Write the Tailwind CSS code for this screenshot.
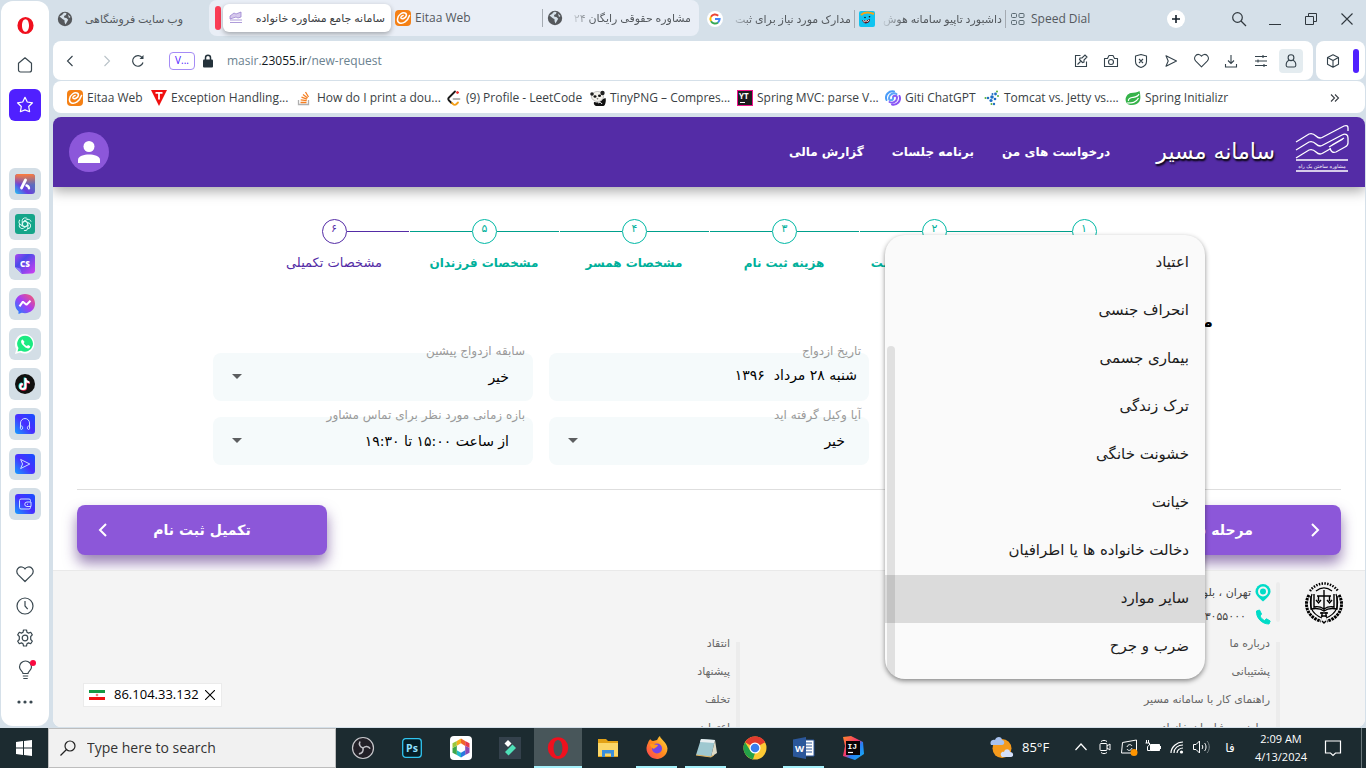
<!DOCTYPE html>
<html lang="fa">
<head>
<meta charset="utf-8">
<meta name="viewport" content="width=device-width, initial-scale=1">
<title>سامانه جامع مشاوره خانواده</title>
<script src="https://cdn.jsdelivr.net/npm/@tailwindcss/browser@4"></script>
</head>
<body class="flex h-screen flex-col overflow-hidden bg-[#d5e0e9] font-['Open_Sans','DejaVu_Sans',sans-serif] text-xs text-[#3a3f45]">

<svg width="0" height="0" class="absolute" aria-hidden="true">
  <defs>
    <linearGradient id="gAria" x1="0" y1="1" x2="1" y2="0"><stop offset="0" stop-color="#22c8f0"/><stop offset=".35" stop-color="#6a3be0"/><stop offset=".65" stop-color="#5b6cc0"/><stop offset="1" stop-color="#3b62d0"/></linearGradient>
    <linearGradient id="gTop" x1="0" y1="0" x2="0" y2="1"><stop offset="0" stop-color="#ff7a3c"/><stop offset=".55" stop-color="#ff7a3c" stop-opacity="0"/></linearGradient>
    <linearGradient id="gCs" x1="0" y1="0" x2="1" y2="1"><stop offset="0" stop-color="#b045f0"/><stop offset=".35" stop-color="#4a4be8"/><stop offset="1" stop-color="#d63df2"/></linearGradient>
    <linearGradient id="gMsg" x1="0" y1="1" x2="1" y2="0"><stop offset="0" stop-color="#0a8cff"/><stop offset=".5" stop-color="#a63cf5"/><stop offset="1" stop-color="#ff5c60"/></linearGradient>
    <linearGradient id="gBlue" x1="0" y1="1" x2="1" y2="0"><stop offset="0" stop-color="#14a0ff"/><stop offset=".5" stop-color="#4a2dff"/><stop offset="1" stop-color="#1450ff"/></linearGradient>
    <linearGradient id="gFox" x1="0" y1="1" x2="1" y2="0"><stop offset="0" stop-color="#ff3b5c"/><stop offset=".5" stop-color="#ff8a1e"/><stop offset="1" stop-color="#ffe040"/></linearGradient>
    <linearGradient id="gIj" x1="0" y1="0" x2="1" y2="1"><stop offset="0" stop-color="#ff8a2a"/><stop offset=".45" stop-color="#f5336e"/><stop offset=".6" stop-color="#2a7df5"/><stop offset="1" stop-color="#12b7f5"/></linearGradient>
    <symbol id="globe" viewBox="0 0 16 16"><circle cx="8" cy="8" r="7.200" fill="#55585c"/><path d="M2.500 5.500 5 4l2-2.200 2.500.3-.5 2-2 1 .4 1.700 2 .2 1.800 1.700-1 1.800-1.700 3-.9-2.200-.1-2-2-1.200z" fill="#d5e0e9"/><path d="M11 3.500 13.500 6l-1.500 1z" fill="#d5e0e9"/></symbol>
    <symbol id="eitaa" viewBox="0 0 16 16"><rect width="16" height="16" rx="4" fill="#f58014"/><path d="M14.500 5.500c-2 6-6.500 8.700-10 7.500C1.500 12 1.800 6.500 5.500 4 8.800 1.800 12 3 11.300 5.800c-.6 2.200-3.800 3.400-5.100 2.600-1-.7.5-2.900 2-3" fill="none" stroke="#fff" stroke-width="1.500" stroke-linecap="round"/></symbol>
    <symbol id="send" viewBox="0 0 16 16"><path d="M3 2.800 13.500 8 3 13.200 5.200 8z" fill="none" stroke="currentColor" stroke-width="1.100" stroke-linejoin="round"/></symbol>
    <symbol id="heart" viewBox="0 0 20 20"><path d="M10 17.500 3.300 10.800C-.2 7 3.500 1.500 7.800 3.200 9 3.600 9.600 4.300 10 5c.4-.7 1-1.400 2.200-1.800 4.300-1.700 8 3.800 4.500 7.600z" fill="none" stroke="currentColor" stroke-width="1.200" stroke-linejoin="round"/></symbol>
    <symbol id="opera" viewBox="0 0 20 20"><path fill-rule="evenodd" fill="#f0101e" d="M10 1a8.500 9 0 1 0 0 18 8.500 9 0 0 0 0-18zm0 2.300c2.200 0 3.700 3 3.700 6.700s-1.500 6.700-3.700 6.700S6.300 13.700 6.300 10 7.800 3.300 10 3.300z"/></symbol>
  </defs>
</svg>

<div class="flex min-h-0 flex-1 gap-1 pl-px">

  <!-- Browser sidebar -->
  <aside class="my-px mb-[2px] flex w-12 shrink-0 flex-col items-center rounded-xl bg-white pt-3 pb-2 text-[#3a4850]">
    <button aria-label="Opera menu" class="h-6 w-6"><svg viewBox="0 0 20 20" class="mx-auto h-[19px] w-[19px]"><use href="#opera"/></svg></button>
    <button aria-label="Home" class="mt-4 h-6 w-6"><svg viewBox="0 0 20 20" class="mx-auto h-5 w-5" fill="none" stroke="currentColor" stroke-width="1.200" stroke-linejoin="round"><path d="M3.500 8.200 10 2.800l6.500 5.400V15a2 2 0 0 1-2 2h-9a2 2 0 0 1-2-2z"/></svg></button>
    <button aria-label="Workspace" class="mt-3 h-8 w-8 rounded-md bg-[#5020ff] text-white"><svg viewBox="0 0 20 20" class="mx-auto h-5 w-5" fill="none" stroke="currentColor" stroke-width="1.200" stroke-linejoin="round"><path d="M10 2.300 12.300 7l5.200.8-3.800 3.700.9 5.200-4.600-1.800-4.600 1.800.9-5.200L2.500 7.800 7.700 7z"/></svg></button>
    <div class="mt-[47px] flex flex-col gap-2">
      <button aria-label="Aria" class="flex h-8 w-8 items-center justify-center rounded-md bg-[#d3dee6]"><svg viewBox="0 0 20 20" class="h-5 w-5"><rect width="20" height="20" rx="3" fill="url(#gAria)"/><rect width="20" height="20" rx="3" fill="url(#gTop)"/><path d="M6.500 14 10.500 6" stroke="#fff" stroke-width="2.800" stroke-linecap="round"/><path d="M11.500 11.500c1.500.3 2.200 1.200 2.500 2.800" fill="none" stroke="#fff" stroke-width="2.400" stroke-linecap="round"/></svg></button>
      <button aria-label="ChatGPT" class="flex h-8 w-8 items-center justify-center rounded-md bg-[#d3dee6]"><svg viewBox="0 0 20 20" class="h-5 w-5"><rect width="20" height="20" rx="3" fill="#15a58a"/><g fill="none" stroke="#e8fffa" stroke-width=".9"><g id="petal"><path d="M7.200 12.500V6.500a3 3 0 0 1 5.500-1.300M7.200 8.300l4.500-2.600a3 3 0 0 1 4.400 2"/></g><use href="#petal" transform="rotate(120 10 10)"/><use href="#petal" transform="rotate(240 10 10)"/><path d="m10 7.300 2.400 1.400v2.700L10 12.700l-2.400-1.300V8.700z"/></g></svg></button>
      <button aria-label="ChatSonic" class="flex h-8 w-8 items-center justify-center rounded-md bg-[#d3dee6]"><svg viewBox="0 0 20 20" class="h-5 w-5"><path d="M3 0h14a3 3 0 0 1 3 3v13a3 3 0 0 1-3 3.500l-10 .5-7-7V3a3 3 0 0 1 3-3z" fill="url(#gCs)"/><path d="m0 13 5 1.500L7 20z" fill="#8f7bff"/><text x="10" y="13" text-anchor="middle" font-family="Open Sans" font-size="8" font-weight="800" fill="#fff">CS</text></svg></button>
      <button aria-label="Messenger" class="flex h-8 w-8 items-center justify-center rounded-md bg-[#d3dee6]"><svg viewBox="0 0 20 20" class="h-5 w-5"><path d="M10 0c6 0 10 4.200 10 9.600s-4 9.600-10 9.600c-1.200 0-2.300-.2-3.300-.5L3.500 20v-2.700C1.300 15.600 0 12.900 0 9.600 0 4.200 4 0 10 0z" fill="url(#gMsg)"/><path d="m4.500 12.300 3.400-4.600 3.600 3 4-4" fill="none" stroke="#fff" stroke-width="2" stroke-linejoin="bevel"/></svg></button>
      <button aria-label="WhatsApp" class="flex h-8 w-8 items-center justify-center rounded-md bg-[#d3dee6]"><svg viewBox="0 0 20 20" class="h-5 w-5"><path d="M10 0a9.800 9.800 0 1 1-4.800 18.600L0 20l1.400-5A9.800 9.800 0 0 1 10 0z" fill="#fff"/><path d="M10.200 1.700a8 8 0 1 1-4.100 15L2.500 17.500l1-3.400a8 8 0 0 1 6.700-12.400z" fill="#1bea81"/><path d="M7.600 5.500c-2 .8-2 3 .2 5.600s4.800 4.200 6.800 2.900l.7-1.800-2.200-1.300-1.300 1.200c-1.500-.6-2.500-1.700-3.100-3l.9-1.100z" fill="#fff"/></svg></button>
      <button aria-label="TikTok" class="flex h-8 w-8 items-center justify-center rounded-md bg-[#d3dee6]"><svg viewBox="0 0 20 20" class="h-5 w-5"><circle cx="10" cy="10" r="10" fill="#10100f"/><g fill="none" stroke-width="2"><path d="M10.200 4v8.500a2.600 2.600 0 1 1-2.700-2.600M10.200 4.500a4 4 0 0 0 3.900 3.700" stroke="#2df1ea" transform="translate(-.5 -.4)"/><path d="M10.200 4v8.500a2.600 2.600 0 1 1-2.700-2.600M10.200 4.500a4 4 0 0 0 3.900 3.700" stroke="#fe2c55" transform="translate(.9 .7)"/><path d="M10.500 4v8.500a2.600 2.600 0 1 1-2.700-2.600M10.500 4.500a4 4 0 0 0 3.900 3.700" stroke="#fff"/></g></svg></button>
      <button aria-label="Player" class="flex h-8 w-8 items-center justify-center rounded-md bg-[#d3dee6]"><svg viewBox="0 0 20 20" class="h-5 w-5"><rect width="20" height="20" rx="3" fill="url(#gBlue)"/><path d="M5.500 14V9a4.500 4.500 0 0 1 9 0v5M5.500 12h1c1.500 0 1.500 3.500 0 3.500-1.200 0-1.200-1-1-3.500zm9 0h-1c-1.500 0-1.500 3.500 0 3.500 1.200 0 1.200-1 1-3.500z" fill="none" stroke="#cfe4ff"/></svg></button>
      <button aria-label="My Flow" class="flex h-8 w-8 items-center justify-center rounded-md bg-[#d3dee6]"><svg viewBox="0 0 20 20" class="h-5 w-5 text-[#cfe4ff]"><rect width="20" height="20" rx="3" fill="url(#gBlue)"/><use href="#send" x="3" y="3" width="14" height="14"/></svg></button>
      <button aria-label="Wallet" class="flex h-8 w-8 items-center justify-center rounded-md bg-[#d3dee6]"><svg viewBox="0 0 20 20" class="h-5 w-5"><rect width="20" height="20" rx="3" fill="url(#gBlue)"/><path d="M15.500 7.500V6.500A1.500 1.500 0 0 0 14 5H6a1.500 1.500 0 0 0-1.500 1.500v7A1.500 1.500 0 0 0 6 15h8a1.500 1.500 0 0 0 1.500-1.500v-1M16 8h-4a2 2 0 0 0 0 4.500h4zM12 10.300h1" fill="none" stroke="#cfe4ff"/></svg></button>
    </div>
    <div class="mt-auto flex flex-col items-center">
      <button aria-label="Bookmarks" class="flex h-8 w-8 items-center justify-center"><svg viewBox="0 0 20 20" class="h-5 w-5"><use href="#heart"/></svg></button>
      <button aria-label="History" class="flex h-8 w-8 items-center justify-center"><svg viewBox="0 0 20 20" class="h-5 w-5" fill="none" stroke="currentColor" stroke-width="1.200"><circle cx="10" cy="10" r="8"/><path d="M10 5v5l2.700 3.200"/></svg></button>
      <button aria-label="Settings" class="flex h-8 w-8 items-center justify-center"><svg viewBox="0 0 20 20" class="h-5 w-5" fill="none" stroke="currentColor" stroke-width="1.200" stroke-linejoin="round"><circle cx="10" cy="10" r="2.800"/><path d="M8.500 2h3l.5 2.300 1.500.8 2.200-.8 1.600 2.600L15.700 8.500v3l1.600 1.600-1.600 2.600-2.200-.8-1.500.8-.5 2.300h-3L8 15.700l-1.500-.8-2.200.8-1.600-2.600 1.600-1.600v-3L2.700 6.900l1.600-2.600 2.200.8L8 4.300z"/></svg></button>
      <button aria-label="Tips" class="relative flex h-8 w-8 items-center justify-center"><svg viewBox="0 0 20 20" class="h-5 w-5" fill="none" stroke="currentColor" stroke-width="1.200"><path d="M8 13.500c0-2-3.500-3-3.500-6.500a6 6 0 0 1 12 0c0 3.500-3.500 4.500-3.500 6.500zM7.800 16h5.400M8.300 18.500h4.400"/></svg><span class="absolute top-[6px] right-[5px] h-[6px] w-[6px] rounded-full bg-[#fa0a40]"></span></button>
      <button aria-label="More" class="flex h-8 w-8 items-center justify-center"><svg viewBox="0 0 20 20" class="h-5 w-5" fill="currentColor"><circle cx="4" cy="10" r="1.600"/><circle cx="10" cy="10" r="1.600"/><circle cx="16" cy="10" r="1.600"/></svg></button>
    </div>
  </aside>

  <div class="flex min-w-0 flex-1 flex-col pr-px">

    <!-- Tab strip -->
    <div class="flex h-[41px] shrink-0 items-start text-[#54595e]">
      <button class="mt-1 flex h-[30px] w-[156px] items-center gap-1 pl-1"><svg class="h-4 w-4 shrink-0"><use href="#globe"/></svg><span dir="rtl" class="w-[106px] whitespace-nowrap text-right text-[11px]">وب سایت فروشگاهی</span></button>
      <div class="flex h-[36px] w-[490px] items-center rounded-lg bg-[#e9eef6] pl-[6px]">
        <span class="h-6 w-[6px] rounded-full bg-[#fa3c55]"></span>
        <button class="ml-[2px] flex h-7 w-[168px] items-center gap-1 rounded-md bg-white px-[6px] text-[#3c4043] shadow-[0_2px_5px_rgba(0,0,0,.3)]"><svg viewBox="0 0 14 14" class="h-[14px] w-[14px] shrink-0"><path d="m1 5 4-3 2 1 5-2v5L9 7 7 6 1 8zM1 9h12M1 11.500h12" fill="#d6c8ec" stroke="#9b84d0" stroke-width=".8"/></svg><span dir="rtl" class="min-w-0 flex-1 whitespace-nowrap text-right text-[11px]">سامانه جامع مشاوره خانواده</span></button>
        <button class="ml-1 flex h-[18px] w-[148px] items-center gap-1 border-r border-[#a5abb2]"><svg class="h-4 w-4 shrink-0"><use href="#eitaa"/></svg>Eitaa Web</button>
        <button class="flex h-7 w-[149px] items-center gap-[6px] pl-1"><svg class="h-4 w-4 shrink-0"><use href="#globe"/></svg><span dir="rtl" class="w-[122px] overflow-hidden whitespace-nowrap text-right text-[11px] [mask-image:linear-gradient(to_right,transparent,black_24px)]">مشاوره حقوقی رایگان ۲۴</span></button>
      </div>
      <button class="mt-1 flex h-[30px] w-[155px] items-center gap-[6px] pl-2"><svg viewBox="0 0 16 16" class="h-4 w-4 shrink-0"><circle cx="8" cy="8" r="8" fill="#fff"/><g fill="none" stroke-width="2"><path d="M11.200 4.700A4.600 4.600 0 0 0 4 5.700" stroke="#ea4335"/><path d="M4 5.700a4.600 4.600 0 0 0 0 4.600" stroke="#fbbc05"/><path d="M4 10.300a4.600 4.600 0 0 0 7 1.100" stroke="#34a853"/><path d="M8 8h4.600a4.600 4.600 0 0 1-1.600 3.400" stroke="#4285f4"/></g></svg><span dir="rtl" class="w-[122px] overflow-hidden whitespace-nowrap text-right text-[11px] [mask-image:linear-gradient(to_right,transparent,black_24px)]">مدارک مورد نیاز برای ثبت</span></button>
      <button class="mt-[10px] flex h-[18px] w-[152px] items-center gap-[5px] border-x border-[#a5abb2] pl-1"><svg viewBox="0 0 16 16" class="h-4 w-4 shrink-0"><rect width="16" height="16" rx="2" fill="#10c4f0"/><path d="M2 4C5 1 10 1 15 3" stroke="#f5a31a" stroke-width="2" fill="none"/><path d="M3 9c3 1 6 0 8-1 .5 4-6 7-8 1z" fill="#5a1620"/><path d="m4 9.500 1.500 1.200L7 9.700l1.500.8 1.500-1.300" fill="none" stroke="#fff"/><circle cx="6" cy="6.500" r=".8" fill="#111"/><circle cx="10.500" cy="5.800" r=".8" fill="#111"/></svg><span dir="rtl" class="w-[122px] overflow-hidden whitespace-nowrap text-right text-[11px] [mask-image:linear-gradient(to_right,transparent,black_24px)]">داشبورد تاپیو سامانه هوش</span></button>
      <button class="mt-1 flex h-[30px] items-center gap-[6px] pl-[5px]"><svg viewBox="0 0 14 14" class="h-[14px] w-[14px]" fill="none" stroke="#5b6a72"><rect x=".5" y="1.500" width="5" height="4" rx="1"/><rect x="8" y="1.500" width="5" height="4" rx="1"/><rect x=".5" y="8.500" width="5" height="4" rx="1"/><rect x="8" y="8.500" width="5" height="4" rx="1"/></svg>Speed Dial</button>
      <button aria-label="New tab" class="mt-[10px] ml-auto flex h-[18px] w-[18px] items-center justify-center rounded-full bg-white"><svg viewBox="0 0 8 8" class="h-2 w-2"><path d="M4 0v8M0 4h8" stroke="#14202a" stroke-width="1.600"/></svg></button>
      <div class="mt-[7px] ml-[36px] flex text-[#30383e]">
        <button aria-label="Search tabs" class="flex h-6 w-9 items-center justify-center"><svg viewBox="0 0 16 16" class="h-4 w-4" fill="none" stroke="currentColor" stroke-width="1.200"><circle cx="6.500" cy="6.500" r="4.800"/><path d="m10 10 5 5"/></svg></button>
        <button aria-label="Minimize" class="flex h-6 w-9 items-center justify-center"><svg viewBox="0 0 14 14" class="h-[14px] w-[14px]"><path d="M1 12.500h12" stroke="currentColor"/></svg></button>
        <button aria-label="Restore" class="flex h-6 w-9 items-center justify-center"><svg viewBox="0 0 14 14" class="h-[14px] w-[14px]" fill="none" stroke="currentColor"><path d="M1.500 4.500h8v8h-8zM4.500 4.500v-3h8v8h-3"/></svg></button>
        <button aria-label="Close" class="flex h-6 w-9 items-center justify-center"><svg viewBox="0 0 14 14" class="h-[14px] w-[14px]"><path d="m1.500 1.500 11 11M12.500 1.500l-11 11" stroke="currentColor" stroke-width="1.100"/></svg></button>
      </div>
    </div>

    <!-- Address bar -->
    <div class="flex h-[39px] shrink-0 gap-[3px] text-[#34424b]">
      <div class="flex min-w-0 flex-1 items-center rounded-lg bg-white pr-[7px] pl-2">
        <button aria-label="Back" class="flex w-[18px] justify-center"><svg viewBox="0 0 12 12" class="h-3 w-3" fill="none" stroke="currentColor" stroke-width="1.100"><path d="M8.500 1 3.500 6l5 5"/></svg></button>
        <button aria-label="Forward" class="ml-[19px] flex w-[18px] justify-center text-[#b9c2c8]"><svg viewBox="0 0 12 12" class="h-3 w-3" fill="none" stroke="currentColor" stroke-width="1.100"><path d="m3.500 1 5 5-5 5"/></svg></button>
        <button aria-label="Reload" class="ml-[12px] flex w-[20px] justify-center"><svg viewBox="0 0 14 14" class="h-[14px] w-[14px]" fill="none" stroke="currentColor" stroke-width="1.200"><path d="M12 8.500a5.300 5.300 0 1 1-.7-4.600"/><path d="M12.500 1v4h-4z" fill="currentColor" stroke="none"/></svg></button>
        <button class="ml-[21px] flex h-[18px] w-[26px] items-center justify-center rounded border border-[#a58cf5] text-[10px] text-[#5020ff]">V...</button>
        <svg viewBox="0 0 12 14" class="ml-[7px] h-[14px] w-3"><rect x="1" y="5.500" width="10" height="8" rx="1" fill="#24323b"/><path d="M3.500 6V3.700a2.500 2.500 0 0 1 5 0V6" fill="none" stroke="#24323b" stroke-width="1.500"/></svg>
        <a href="#" class="ml-[13px] text-xs text-[#6b828f]">masir.<span class="text-[#10181d]">23055.ir</span>/new-request</a>
        <div class="ml-auto flex">
          <button aria-label="Edit" class="flex h-6 w-[30px] items-center justify-center"><svg viewBox="0 0 16 16" class="h-4 w-4" fill="none" stroke="currentColor" stroke-width="1.100"><path d="M7.500 2.500h-5v11h11v-5M4.500 11.500 8 8M6.500 6.500l3 3 1.500-.5V7l3-3-2-2-3 3H7z"/></svg></button>
          <button aria-label="Snapshot" class="flex h-6 w-[30px] items-center justify-center"><svg viewBox="0 0 16 16" class="h-4 w-4" fill="none" stroke="currentColor" stroke-width="1.100"><path d="M1.500 5.500h3l1.500-3h4l1.500 3h3v8h-13z" stroke-linejoin="round"/><circle cx="8" cy="9" r="2.500"/></svg></button>
          <button aria-label="Ad blocker" class="flex h-6 w-[30px] items-center justify-center"><svg viewBox="0 0 16 16" class="h-4 w-4" fill="none" stroke="currentColor" stroke-width="1.100"><path d="M8 1.500 13.500 3v5.500c0 3-2.500 5-5.500 6-3-1-5.500-3-5.500-6V3zM6 6l4 4M10 6l-4 4" stroke-linejoin="round"/></svg></button>
          <button aria-label="Send to My Flow" class="flex h-6 w-[30px] items-center justify-center"><svg class="h-4 w-4"><use href="#send"/></svg></button>
          <button aria-label="Add to bookmarks" class="flex h-6 w-[30px] items-center justify-center"><svg viewBox="0 0 20 20" class="h-[17px] w-[17px]"><use href="#heart"/></svg></button>
          <button aria-label="Downloads" class="flex h-6 w-[30px] items-center justify-center"><svg viewBox="0 0 16 16" class="h-4 w-4" fill="none" stroke="currentColor" stroke-width="1.100"><path d="M8 2v8M5 7.500l3 3 3-3M2.500 11v3h11v-3"/></svg></button>
          <button aria-label="Easy setup" class="flex h-6 w-[30px] items-center justify-center"><svg viewBox="0 0 16 16" class="h-4 w-4" fill="none" stroke="currentColor" stroke-width="1.100"><path d="M2 3.500h12M2 8h12M2 12.500h12M10 2v3M5 6.500v3M11 11v3"/></svg></button>
          <button aria-label="Profile" class="mx-[3px] flex h-6 w-6 items-center justify-center rounded bg-[#e4ecf0]"><svg viewBox="0 0 16 16" class="h-4 w-4" fill="none" stroke="currentColor" stroke-width="1.100"><circle cx="8" cy="4.700" r="2.900"/><path d="M6 7.300c-2 1-3 3-2.800 5.200.1.900.8 1.500 1.600 1.500h6.400c.8 0 1.500-.6 1.600-1.500.2-2.200-.8-4.200-2.800-5.200"/></svg></button>
        </div>
      </div>
      <div class="flex w-[49px] items-center justify-between rounded-lg bg-white pr-[6px] pl-[9px]">
        <button aria-label="Extensions" class="h-4 w-4"><svg viewBox="0 0 16 16" class="h-4 w-4" fill="none" stroke="currentColor" stroke-width="1.100" stroke-linejoin="round"><path d="m8 1.800 5.500 2.700v6.700L8 14.200l-5.500-3V4.500zM2.500 4.500 8 7.500l5.500-3M8 7.500v6.700"/></svg></button>
        <span class="h-6 w-[6px] rounded-full bg-[#5020ff]"></span>
      </div>
    </div>

    <!-- Bookmarks bar -->
    <nav class="mt-px flex h-8 shrink-0 items-center overflow-hidden rounded-lg bg-white pt-[2px] pl-[14px] whitespace-nowrap">
      <a href="#" class="flex w-[84px] items-center gap-1"><svg class="h-4 w-4 shrink-0"><use href="#eitaa"/></svg>Eitaa Web</a>
      <a href="#" class="flex w-[146px] items-center gap-1"><svg viewBox="0 0 16 16" class="h-4 w-4 shrink-0"><path d="M0 0h16L8 16z" fill="#f01010"/><path d="M4.500 2.800h7M8 3v6.500" stroke="#fff" stroke-width="1.800"/></svg>Exception Handling...</a>
      <a href="#" class="flex w-[149px] items-center gap-1"><svg viewBox="0 0 16 16" class="h-4 w-4 shrink-0"><path d="M1.500 10v4.500h10V10" fill="none" stroke="#b0b0b0" stroke-width="1.300"/><path d="M3.500 12.500h6M3.700 9.900l6 .7M4.500 7.200l5.500 2M6 4.500l4.600 3.500M8.500 2l3 5" stroke="#f48024" stroke-width="1.300"/></svg>How do I print a dou...</a>
      <a href="#" class="flex w-[144px] items-center gap-1"><svg viewBox="0 0 16 16" class="h-4 w-4 shrink-0" fill="none" stroke-width="1.800" stroke-linecap="round"><path d="m9 1.500-6 6c-1 1-1 2 0 3L5.500 13" stroke="#1a1a1a"/><path d="m6 13 1 1c1 1 2.500 1 3.500 0L12 12.500" stroke="#f5a11a"/><path d="M7.500 9h6" stroke="#b3b3b3"/><circle cx="11.500" cy="2.500" r="1" fill="#e33" stroke="#e33" stroke-width="1"/></svg>(9) Profile - LeetCode</a>
      <a href="#" class="flex w-[147px] items-center gap-1"><svg viewBox="0 0 16 16" class="h-4 w-4 shrink-0"><ellipse cx="7.500" cy="6.500" rx="6" ry="5" fill="#f4f2ec" stroke="#888" stroke-width=".5"/><circle cx="2" cy="4" r="1.800" fill="#222"/><circle cx="12.500" cy="3" r="2.200" fill="#222"/><ellipse cx="5" cy="6.500" rx="1.500" ry="1.200" fill="#111"/><ellipse cx="9.500" cy="5.800" rx="1.500" ry="1.200" fill="#111"/><path d="M6.500 8.500h2l-1 1zM4 12c4 1 7 0 9-3l2.500-1c1 3-.5 8-2 8H6c-2-1-2.500-2-2-4z" fill="#111"/><path d="M8 13c1.500-1 3-1 4 1" stroke="#eee" fill="none"/></svg>TinyPNG – Compres...</a>
      <a href="#" class="flex w-[148px] items-center gap-1"><svg viewBox="0 0 16 16" class="h-4 w-4 shrink-0"><rect x=".5" y=".5" width="15" height="15" fill="#1c1c1e" stroke="#f0148c"/><text x="2" y="8.500" font-family="Open Sans" font-size="8" font-weight="700" fill="#fff">YT</text><path d="M3 12.500h5" stroke="#fff" stroke-width="1.200"/></svg>Spring MVC: parse V...</a>
      <a href="#" class="flex w-[99px] items-center gap-1"><svg viewBox="0 0 16 16" class="h-4 w-4 shrink-0" fill="none" stroke-width="2" stroke-linecap="round"><path d="M8 8c0-3 4-3 4 0s-4 6-7.500 4" stroke="#8a5cf5"/><path d="M8 8c0 3-4 3-4 0s4-6 7.500-4" stroke="#5aa3f8"/><path d="M1.500 10C-.5 5 4 .5 9 1.500" stroke="#4a9cf8"/><path d="M14.500 6c2 5-2.500 9.500-7.500 8.500" stroke="#8a55f5"/></svg>Giti ChatGPT</a>
      <a href="#" class="flex w-[141px] items-center gap-1"><svg viewBox="0 0 16 16" class="h-4 w-4 shrink-0"><g fill="#1f6fc4"><circle cx="8" cy="7" r="1.800"/><circle cx="4" cy="8" r="1.300"/><circle cx="11.500" cy="4" r="1.400"/><circle cx="7" cy="10.500" r="1.600"/><circle cx="11" cy="9" r="1.300"/><circle cx="8.500" cy="4" r="1"/><circle cx="10" cy="14" r="1.200"/></g><g fill="#58b03a"><circle cx="1.500" cy="8" r="1"/><circle cx="13" cy="1.500" r="1"/><circle cx="7.500" cy="14" r="1"/><circle cx="14" cy="6" r="1"/></g></svg>Tomcat vs. Jetty vs....</a>
      <a href="#" class="flex items-center gap-1"><svg viewBox="0 0 16 16" class="h-4 w-4 shrink-0"><path d="M14.500 1c1 4 1.500 8-.5 11-2.500 3.500-9 4-12 1.500C-1 10 1 4 6 3c3-.5 6 0 8.500-2z" fill="#35b34a"/><path d="M14 4C13 7 10 7 7 7.500c-2.500.4-4 2-3.500 3.500M2 13c5 0 9 0 11.500-5" fill="none" stroke="#fff" stroke-width="1.200"/></svg>Spring Initializr</a>
      <button aria-label="More bookmarks" class="mr-[25px] ml-auto"><svg viewBox="0 0 10 8" class="h-2 w-[10px]" fill="none" stroke="#3a3f45" stroke-width="1.100"><path d="m1 .5 3.500 3.500L1 7.500M5 .5 8.500 4 5 7.500"/></svg></button>
    </nav>

    <!-- Web page -->
    <div dir="rtl" class="relative mt-1 mb-px flex min-h-0 flex-1 flex-col overflow-hidden rounded-lg bg-white font-['DejaVu_Sans',sans-serif] text-black">
      <header class="relative z-10 flex h-[70px] shrink-0 items-center bg-[#542ca6] pr-4 pl-4 text-white shadow-[0_4px_12px_rgba(0,0,0,.35)]">
        <svg viewBox="0 0 54 48" class="mb-2 h-12 w-[54px]" fill="none" stroke="#fff" stroke-width="1.300"><path d="m1 18 13-8c3-1 5 0 7 2s4 3 7 1L49 2c3-1 4 0 4 2v3M1 26l13-8c3-1 5 0 7 2s4 3 7 1l19-10c4-2 6 0 6 3v5c0 2-1 3-3 4l-9 5c-3 1-5 0-6-4M1 34l13-8c3-1 5 0 7 2s4 3 7 1l7-4M34 23l14-8M37 21l12-7"/><path d="M1 36h52M1 47h52"/><text x="27" y="44" text-anchor="middle" direction="rtl" font-family="DejaVu Sans" font-size="5" fill="#fff" stroke="none">مشاوره ساختن یک راه</text></svg>
        <h1 class="mr-5 text-[22px] leading-8 [text-shadow:1px_2px_2px_#000]">سامانه مسیر</h1>
        <nav class="mr-[46px] flex gap-7 text-xs font-bold">
          <a href="#">درخواست های من</a><a href="#">برنامه جلسات</a><a href="#">گزارش مالی</a>
        </nav>
        <button aria-label="حساب کاربری" class="mr-auto flex h-10 w-10 items-center justify-center rounded-full bg-[#8c57da]"><svg viewBox="0 0 22 22" class="h-[22px] w-[22px]" fill="#fff"><circle cx="11" cy="5.500" r="5.500"/><path d="M0 22v-3c0-4 6-5.500 11-5.500S22 15 22 19v3z"/></svg></button>
      </header>

      <main class="shrink-0">
        <ol class="mx-auto mt-8 grid w-[900px] max-w-full grid-cols-6 text-center text-xs font-bold text-[#00b09b]">
          <li><div class="flex items-center"><span class="flex-1"></span><span class="flex h-[25px] w-[25px] items-center justify-center rounded-full border border-[#00b8a5] pb-1 text-[11px] font-normal">۱</span><span class="h-px flex-1 bg-[#00a08c]"></span></div><div class="mt-[9px] h-5 leading-5">قوانین</div></li>
          <li><div class="flex items-center"><span class="h-px flex-1 bg-[#00a08c]"></span><span class="flex h-[25px] w-[25px] items-center justify-center rounded-full border border-[#00b8a5] pb-1 text-[11px] font-normal">۲</span><span class="ml-px h-px flex-1 bg-[#00a08c]"></span></div><div class="mt-[9px] h-5 leading-5 whitespace-nowrap">تکمیل اطلاعات و ثبت</div></li>
          <li><div class="flex items-center"><span class="h-px flex-1 bg-[#00a08c]"></span><span class="flex h-[25px] w-[25px] items-center justify-center rounded-full border border-[#00b8a5] pb-1 text-[11px] font-normal">۳</span><span class="ml-px h-px flex-1 bg-[#00a08c]"></span></div><div class="mt-[9px] h-5 leading-5">هزینه ثبت نام</div></li>
          <li><div class="flex items-center"><span class="h-px flex-1 bg-[#00a08c]"></span><span class="flex h-[25px] w-[25px] items-center justify-center rounded-full border border-[#00b8a5] pb-1 text-[11px] font-normal">۴</span><span class="ml-px h-px flex-1 bg-[#00a08c]"></span></div><div class="mt-[9px] h-5 leading-5">مشخصات همسر</div></li>
          <li><div class="flex items-center"><span class="h-px flex-1 bg-[#00a08c]"></span><span class="flex h-[25px] w-[25px] items-center justify-center rounded-full border border-[#00b8a5] pb-1 text-[11px] font-normal">۵</span><span class="ml-px h-px flex-1 bg-[#00a08c]"></span></div><div class="mt-[9px] h-5 leading-5">مشخصات فرزندان</div></li>
          <li aria-current="step" class="text-[13px] font-normal text-[#542ca6]"><div class="flex items-center"><span class="h-px flex-1 bg-[#542ca6]"></span><span class="flex h-[25px] w-[25px] items-center justify-center rounded-full border border-[#542ca6] pb-1 text-[11px]">۶</span><span class="flex-1"></span></div><div class="mt-[9px] h-5 leading-5">مشخصات تکمیلی</div></li>
        </ol>

        <div class="mx-auto mt-[37px] w-[1008px] max-w-full"><h2 class="h-6 text-base leading-6 font-bold">مشخصات تکمیلی</h2></div>

        <form class="mx-auto mt-[19px] grid w-[992px] max-w-full grid-cols-3 gap-4">
          <div class="relative"><label for="f1" class="absolute -top-3 right-2 text-xs leading-5 text-[#9a9a9a]">علت مراجعه</label><select id="f1" class="h-12 w-full appearance-none rounded-lg bg-[#f5fafb] px-6 text-sm"><option>سایر موارد</option></select></div>
          <div class="relative"><label for="f2" class="absolute -top-3 right-2 text-xs leading-5 text-[#9a9a9a]">تاریخ ازدواج</label><input id="f2" type="text" value="شنبه ۲۸ مرداد&nbsp; ۱۳۹۶" class="h-12 w-full rounded-lg bg-[#f5fafb] px-3 pb-1 text-sm"></div>
          <div class="relative"><label for="f3" class="absolute -top-3 right-2 text-xs leading-5 text-[#9a9a9a]">سابقه ازدواج پیشین</label><select id="f3" class="h-12 w-full appearance-none rounded-lg bg-[#f5fafb] px-6 text-sm"><option>خیر</option></select><span class="pointer-events-none absolute top-[21px] left-[19px] border-x-[5px] border-t-[5px] border-x-transparent border-t-[#5c5e60]"></span></div>
          <div class="relative"><label for="f4" class="absolute -top-3 right-2 text-xs leading-5 text-[#9a9a9a]">شغل</label><input id="f4" type="text" class="h-12 w-full rounded-lg bg-[#f5fafb] px-3 text-sm"></div>
          <div class="relative"><label for="f5" class="absolute -top-3 right-2 text-xs leading-5 text-[#9a9a9a]">آیا وکیل گرفته اید</label><select id="f5" class="h-12 w-full appearance-none rounded-lg bg-[#f5fafb] px-6 text-sm"><option>خیر</option></select><span class="pointer-events-none absolute top-[21px] left-[19px] border-x-[5px] border-t-[5px] border-x-transparent border-t-[#5c5e60]"></span></div>
          <div class="relative"><label for="f6" class="absolute -top-3 right-2 text-xs leading-5 text-[#9a9a9a]">بازه زمانی مورد نظر برای تماس مشاور</label><select id="f6" class="h-12 w-full appearance-none rounded-lg bg-[#f5fafb] px-6 text-sm"><option>از ساعت ۱۵:۰۰ تا ۱۹:۳۰</option></select><span class="pointer-events-none absolute top-[21px] left-[19px] border-x-[5px] border-t-[5px] border-x-transparent border-t-[#5c5e60]"></span></div>
        </form>

        <div class="mx-6 mt-6 flex justify-between border-t border-[#dedede] pt-[15px] pb-[15px] text-sm font-bold text-white">
          <button class="flex h-[50px] w-[250px] items-center rounded-lg bg-[#8c57d9] px-5 shadow-[0_8px_14px_rgba(84,44,130,.6)]"><svg viewBox="0 0 12 14" class="h-[14px] w-3" fill="none" stroke="#fff" stroke-width="2"><path d="m3 1 6 6-6 6"/></svg><span class="flex-1 pl-3 text-center">مرحله قبل</span></button>
          <button class="flex h-[50px] w-[250px] items-center rounded-lg bg-[#8c57d9] px-5 shadow-[0_8px_14px_rgba(84,44,130,.6)]"><span class="flex-1 pr-3 text-center">تکمیل ثبت نام</span><svg viewBox="0 0 12 14" class="h-[14px] w-3" fill="none" stroke="#fff" stroke-width="2"><path d="M9 1 3 7l6 6"/></svg></button>
        </div>
      </main>

      <footer class="relative min-h-0 flex-1 overflow-hidden border-t border-[#e9e9e9] bg-[#f4f4f4] pt-[11px] pr-[21px] text-[11px] text-[#666]">
        <div class="flex gap-6">
          <svg viewBox="0 0 40 42" class="h-[42px] w-10 shrink-0" fill="none" stroke="#000"><path d="M6 9C13-1 27-1 34 9" stroke-width="2.500" stroke-dasharray="1.500 1.300"/><path d="M5 13C-1 23 4 36 17 39M35 13c6 10 1 23-12 26" stroke-width="3" stroke-dasharray="2.500 .8"/><path d="M8 12C4 24 8 32 18 36M32 12c4 12 0 20-10 24M12 9c5-4 11-4 16 0" stroke-width="1.200"/><path d="M7 14v13c5-1 9-1 13 2 4-3 8-3 13-2V14M10 12v13c4-1 7 0 10 2 3-2 6-3 10-2V12M20 8v20M13 14h14M12 18l2.500 3 2.500-3M23 18l2.500 3 2.500-3M14.500 14v5M25.500 14v5M16 31h8M17 34h6M18 30v5M22 30v5M18 39l2 2 2-2" stroke-width="1.400"/></svg>
          <div class="flex">
            <span class="h-10 w-1 rounded bg-[#ececec]"></span>
            <address class="mr-[5px] text-[#444] not-italic">
              <div class="flex h-[22px] items-center gap-1"><svg viewBox="0 0 16 18" class="h-[18px] w-4"><path d="M8 17.500C3 13 .5 10.500.5 7.500a7.500 7.500 0 0 1 15 0c0 3-2.500 5.500-7.500 10z" fill="#00dcc8"/><circle cx="8" cy="7.500" r="4" fill="#00dcc8" stroke="#f4f4f4" stroke-width="2"/></svg>تهران ، بلوار کشاورز</div>
              <div class="flex h-[26px] items-center gap-[9px]"><svg viewBox="0 0 16 16" class="h-4 w-4"><path d="M11.500 1 14.500 2C15 9 9 15 2 15L.8 12l3.700-2.200 2 1.700c2-1 3.500-2.500 4.500-4.500L9.500 5z" transform="matrix(-1 0 0 1 16 0)" fill="#00dcc8" stroke="#00dcc8" stroke-linejoin="round"/></svg><span dir="ltr">۰۲۱-۲۳۰۵۵۰۰۰</span></div>
            </address>
          </div>
        </div>
        <div class="mt-2 mr-16 flex">
          <div class="flex basis-[44%]"><span class="mt-1 w-1 bg-[#ececec]"></span><ul class="mr-[6px] leading-7"><li class="-mt-2"><a href="#">درباره ما</a></li><li><a href="#">پشتیبانی</a></li><li><a href="#">راهنمای کار با سامانه مسیر</a></li><li><a href="#">معاونت مشاوران خانواده</a></li></ul></div>
          <div class="flex basis-[44%]"><span class="mt-1 w-1 bg-[#ececec]"></span><ul class="mr-[6px] leading-7"><li class="-mt-2"><a href="#">انتقاد</a></li><li><a href="#">پیشنهاد</a></li><li><a href="#">تخلف</a></li><li><a href="#">اعتراض</a></li></ul></div>
        </div>
      </footer>

      <!-- Open drop-down list -->
      <div role="listbox" class="absolute top-[118px] left-1/2 z-20 ml-[176px] h-[444px] w-[320px] overflow-hidden rounded-[20px] bg-[#fafafa] pt-1 text-[15px] text-[#1c1c1c] shadow-[0_2px_5px_rgba(0,0,0,.45)]">
        <button role="option" class="block h-12 w-full px-4 pb-px text-right">اعتیاد</button>
        <button role="option" class="block h-12 w-full px-4 pb-px text-right">انحراف جنسی</button>
        <button role="option" class="block h-12 w-full px-4 pb-px text-right">بیماری جسمی</button>
        <button role="option" class="block h-12 w-full px-4 pb-px text-right">ترک زندگی</button>
        <button role="option" class="block h-12 w-full px-4 pb-px text-right">خشونت خانگی</button>
        <button role="option" class="block h-12 w-full px-4 pb-px text-right">خیانت</button>
        <button role="option" class="block h-12 w-full px-4 pb-px text-right">دخالت خانواده ها یا اطرافیان</button>
        <button role="option" aria-selected="true" class="block h-12 w-full bg-[#dbdbdb] px-4 pb-px text-right">سایر موارد</button>
        <button role="option" class="block h-12 w-full px-4 pb-px text-right">ضرب و جرح</button>
        <span class="absolute top-[111px] bottom-0 left-[2px] w-2 rounded-t bg-black/10"></span>
      </div>

      <div dir="ltr" class="absolute bottom-5 left-[30px] flex h-6 w-[139px] items-center border border-[#ebebeb] bg-white pl-[5px] font-['Open_Sans',sans-serif] text-[13px] text-black">
        <svg viewBox="0 0 16 10" class="h-[10px] w-4"><path d="M0 0h16v3H0z" fill="#139a44"/><path d="M0 3h16v4H0z" fill="#fff"/><path d="M0 7h16v3H0z" fill="#ee1212"/><circle cx="8" cy="5" r="1.300" fill="#f28080"/></svg>
        <span class="ml-[9px]">86.104.33.132</span>
        <button aria-label="Close" class="ml-auto pr-[6px]"><svg viewBox="0 0 10 10" class="h-[10px] w-[10px]"><path d="m0 0 10 10M10 0 0 10" stroke="#000" stroke-width="1.100"/></svg></button>
      </div>
    </div>
  </div>
</div>

<!-- Taskbar -->
<footer class="flex h-10 shrink-0 items-stretch bg-[#1c2b30] text-white">
  <button aria-label="Start" class="flex w-12 items-center justify-center"><svg viewBox="0 0 16 16" class="h-4 w-4" fill="#fff"><path d="m0 2 7-1v6.500H0zM8 .900 16 0v7.500H8zM0 8.500h7V15l-7-1zM8 8.500h8V16l-8-1z"/></svg></button>
  <label class="flex w-[288px] items-center gap-[11px] border border-[#bdbdbd] bg-[#f1f1f1] pl-[11px]"><svg viewBox="0 0 16 16" class="h-4 w-4" fill="none" stroke="#222" stroke-width="1.200"><circle cx="10" cy="6" r="5"/><path d="m6.500 9.500-6 6"/></svg><input type="text" aria-label="Search" placeholder="Type here to search" class="w-52 bg-transparent text-sm placeholder:text-[#333]"></label>
  <div class="ml-[2px] flex">
    <button aria-label="OBS" class="flex w-[49px] items-center justify-center"><svg viewBox="0 0 24 24" class="h-6 w-6"><circle cx="12" cy="12" r="10.500" fill="#222027" stroke="#c8c8cc" stroke-width="1.200"/><g fill="none" stroke="#c0c0c6" stroke-width="1.600"><path id="blade" d="M12 12c-3-1-4.500-3.500-3-6.500"/><use href="#blade" transform="rotate(120 12 12)"/><use href="#blade" transform="rotate(240 12 12)"/></g></svg></button>
    <button aria-label="Photoshop" class="flex w-[49px] items-center justify-center"><svg viewBox="0 0 20 20" class="h-5 w-5"><rect x=".7" y=".7" width="18.600" height="18.600" rx="3" fill="#061e26" stroke="#31c5f0" stroke-width="1.300"/><text x="10" y="14" text-anchor="middle" font-family="Open Sans" font-size="10.500" font-weight="700" fill="#8fe0ff">Ps</text></svg></button>
    <button aria-label="Recorder" class="flex w-[49px] items-center justify-center"><svg viewBox="0 0 24 24" class="h-6 w-6"><rect x="1" width="22" height="24" rx="4" fill="#fff"/><path d="M12 2.500 16.200 5v5L12 7.200z" fill="#f0642a"/><path d="M16.200 5 20.500 7.300V12l-4.300-2.200z" fill="#e83a4c"/><path d="M20.500 12v4.700L16.200 19v-4.800l0-4.400z" fill="#8a4bb5"/><path d="m16.200 14.200V19L12 21.500v-4.800z" fill="#2a7be0"/><path d="M12 21.500 7.800 19v-4.800l4.200 2.500z" fill="#20b8c8"/><path d="M7.800 19 3.500 16.700V12l4.300-2.200z" fill="#3ea64a"/><path d="M3.500 12V7.300L7.800 5v4.800z" fill="#9cc83c"/><path d="M7.800 5 12 2.500v4.700L7.800 9.800z" fill="#f5b01e"/></svg></button>
    <button aria-label="Filmora" class="flex w-[49px] items-center justify-center"><svg viewBox="0 0 22 22" class="h-[22px] w-[22px]"><path d="M0 0h22v22H0z" fill="#34414c"/><path d="m9 3 3.500 3.500L9 10 5.500 6.500z" fill="#fff"/><path d="m13.500 7.500 3.500 3.500-7.500 7.500L6 15z" fill="#4fe0b8"/></svg></button>
    <button aria-label="Opera" class="flex w-[48px] items-center justify-center border-b-2 border-[#a5f0fa] bg-[#48565a] pt-[2px]"><svg viewBox="0 0 20 20" class="h-6 w-6"><use href="#opera"/></svg></button>
    <button aria-label="File Explorer" class="ml-[1px] flex w-[49px] items-center justify-center"><svg viewBox="0 0 20 18" class="h-[18px] w-5"><path d="M0 0h8l2 2h10v16H0z" fill="#e3a216"/><path d="M0 4h20v13H0z" fill="#fcd768"/><path d="M4 18v-7h12v7h-3v-3.500H7V18z" fill="#3c8fdc"/></svg></button>
    <button aria-label="Firefox" class="mx-1 flex w-[41px] items-center justify-center border-b-2 border-[#a5f0fa] pt-[2px]"><svg viewBox="0 0 22 24" class="h-6 w-[22px]"><path d="M2 7c1-3 2-3 2-4 1 1 2 2 3 2l4-1c1-1 1-3 3-4 0 3 7 6 7.500 12.500A10.500 10.500 0 1 1 2 7z" fill="url(#gFox)"/><circle cx="11" cy="12.500" r="5" fill="#7345e8"/><path d="M4 8c3-1 5 1 8 1-1 3-3 2-4 4-2-1-4-2-4-5z" fill="#ff9a1e"/></svg></button>
    <button aria-label="Notepad" class="mx-1 flex w-[41px] items-center justify-center border-b-2 border-[#a5f0fa] pt-[2px]"><svg viewBox="0 0 24 24" class="h-6 w-6"><path d="m7 3 14 1-4 17-15-2z" fill="#9fc8d0"/><path d="m7 3 14 1-1 3L6 6z" fill="#e8eef0"/><path d="m17 21 6-4-2-13z" fill="#dedbc8"/><path d="m2 19 15 2 3-2" fill="none" stroke="#e6b35a"/></svg></button>
    <button aria-label="Chrome" class="flex w-[49px] items-center justify-center"><svg viewBox="0 0 24 24" class="h-6 w-6"><circle cx="12" cy="12" r="11.500" fill="#fcc934"/><path d="M12 12 2 6.200A11.500 11.500 0 0 1 22 6.200z" fill="#e33b2e"/><path d="M12 .5a11.500 11.500 0 0 1 10 5.700H12z" fill="#e33b2e"/><path d="M2 6.200 7.500 15l4.500 2-2 6.300A11.500 11.500 0 0 1 2 6.200z" fill="#24a148"/><circle cx="12" cy="12" r="5.500" fill="#fff"/><circle cx="12" cy="12" r="4.300" fill="#3b7ded"/></svg></button>
    <button aria-label="Word" class="mx-1 flex w-[41px] items-center justify-center border-b-2 border-[#a5f0fa] pt-[2px]"><svg viewBox="0 0 22 22" class="h-[22px] w-[22px]"><path d="M12 3h9v16h-9z" fill="#fff" stroke="#2b579a"/><path d="M13 6h6M13 9h6M13 12h6M13 15h6" stroke="#2b579a" stroke-width="1.200"/><path d="m0 2.500 13-2.500v22L0 19.500z" fill="#2b579a"/><text x="6.500" y="14.500" text-anchor="middle" font-family="Open Sans" font-size="9.500" font-weight="700" fill="#fff">W</text></svg></button>
    <button aria-label="IntelliJ IDEA" class="flex w-[49px] items-center justify-center"><svg viewBox="0 0 22 24" class="h-6 w-[22px]"><path d="m1 1 8-1 12 6 1 12-9 6-12-4 2-10z" fill="url(#gIj)"/><path d="M4 5h14v14H4z" fill="#0a0507"/><text x="5.500" y="13" font-family="Liberation Mono" font-size="8" font-weight="700" fill="#fff">IJ</text><path d="M6 16.500h5" stroke="#fff" stroke-width="1.200"/></svg></button>
  </div>
  <div class="ml-auto flex items-center">
    <svg viewBox="0 0 24 24" class="h-6 w-6"><circle cx="12" cy="12.500" r="9.500" fill="#f59a1c"/><path d="M1 9c-2-4 2-6 4-5 1-4 7-4 7 0 3 0 3 5 0 5z" fill="#a9c2ee"/><path d="M12 21c-3-3 0-6 2-5 1-4 6-3 6 0 4 0 4 5 1 5z" fill="#d4e0fa"/></svg>
    <span class="ml-2 w-[47px] text-[13px]">85°F</span>
    <div class="flex">
      <button aria-label="Show hidden icons" class="flex w-6 justify-center"><svg viewBox="0 0 16 16" class="h-4 w-4" fill="none" stroke="#fff" stroke-width="1.200"><path d="m2.500 11 5.500-6 5.500 6"/></svg></button>
      <svg viewBox="0 0 16 16" class="mx-1 h-4 w-4" fill="none" stroke="#fff"><rect x="3" y="4.500" width="7" height="7" rx="1"/><path d="m10 7 3-2v6l-3-2M4 2.500c2-1.500 4-1.500 6 0M4 13.500c2 1.500 4 1.500 6 0"/></svg>
      <svg viewBox="0 0 18 18" class="mx-[3px] h-[18px] w-[18px]" fill="none" stroke="#fff"><path d="M2.500 3.500 16.500 1v13H1.500zM7 8c1-3 4-3 5-1M12 9c-1 3-4 3-5 1"/><circle cx="14" cy="13.500" r="3.500" fill="#ff9500" stroke="none"/></svg>
      <svg viewBox="0 0 16 16" class="mx-1 h-4 w-4" fill="none" stroke="#fff"><path d="M5.500 5.500h9v6h-9z" fill="#fff"/><path d="M15.500 7v3M1.500 1v3M3.500 1v3M.5 4h4v2l-2 1.500v4h3"/></svg>
      <svg viewBox="0 0 16 16" class="mx-1 h-4 w-4" fill="none" stroke="#fff" stroke-width="1.200"><path d="M2 14C2 8 8 3 14 3M5 14c0-5 4-8 9-8M8 14c0-3 3-5 6-5"/><circle cx="12.500" cy="13" r="1.600" fill="#fff" stroke="none"/></svg>
      <svg viewBox="0 0 18 16" class="mx-[3px] h-4 w-[18px]" fill="none" stroke="#fff"><path d="M1.500 5.500H4l3.500-3.500v12L4 10.500H1.500zM10 6c1 1 1 3 0 4M12.500 4c2 2 2 6 0 8"/><path d="M15 2c3 3 3 9 0 12" stroke="#7d878a"/></svg>
    </div>
    <span class="w-[34px] text-center text-xs">فا</span>
    <div class="w-[68px] text-center text-[11px] leading-[18px]">2:09 AM<br>4/13/2024</div>
    <button aria-label="Notifications" class="mr-[19px] ml-[9px] flex w-[18px] justify-center"><svg viewBox="0 0 18 18" class="h-[18px] w-[18px]" fill="none" stroke="#fff" stroke-width="1.200"><path d="M1.500 2h15v12h-5L9 16.500 6.500 14h-5z"/></svg></button>
    <span class="mr-1 h-10 w-px bg-[#6a777b]"></span>
  </div>
</footer>
</body>
</html>
